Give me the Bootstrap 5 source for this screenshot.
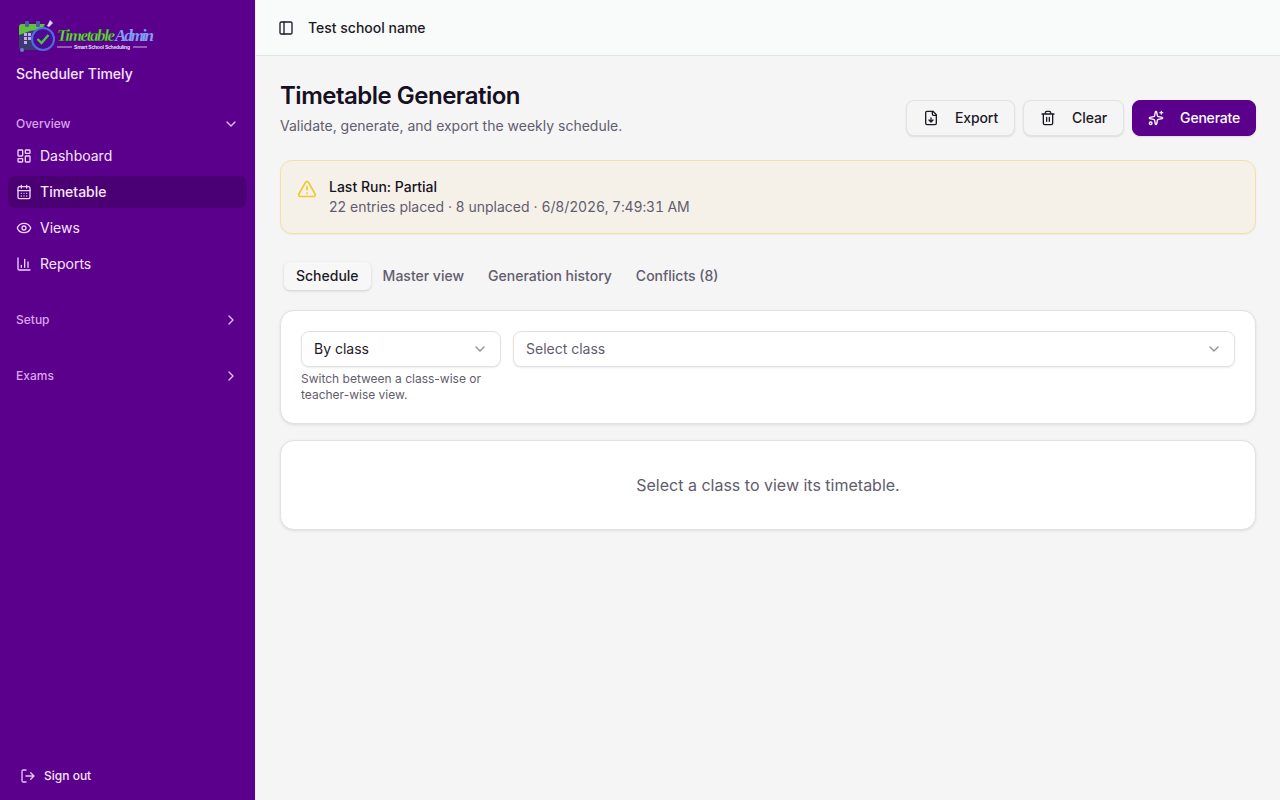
<!DOCTYPE html>
<html>
  <head>
    <title>Timetable Generation</title>
    <link href="https://cdn.jsdelivr.net/npm/bootstrap@5.3.3/dist/css/bootstrap.min.css" rel="stylesheet" />
    <script src="https://cdn.jsdelivr.net/npm/bootstrap@5.3.3/dist/js/bootstrap.bundle.min.js"></script>
    <style>
      body {
        font-family: Inter, "Liberation Sans", sans-serif;
        font-size: 14px;
        line-height: 20px;
        background: #f5f5f5;
        color: #17121f;
        height: 800px;
        overflow: hidden;
      }
      svg.ico {
        width: 16px;
        height: 16px;
        fill: none;
        stroke: currentColor;
        stroke-width: 2;
        stroke-linecap: round;
        stroke-linejoin: round;
        flex-shrink: 0;
      }
      .side-wrap {
        width: 256px;
        height: 800px;
        background: #5b008c;
        border-right: 1px solid #f3f1f5;
        color: #f6e6fd;
        flex-shrink: 0;
      }
      .brand-box {
        padding: 18px 16px 0;
        height: 100px;
      }
      .brand-name {
        font-weight: 500;
        font-size: 14px;
        line-height: 20px;
        margin-top: 8px;
      }
      .logo-text {
        font-family: "Liberation Serif", serif;
        font-style: italic;
        font-weight: 700;
        font-size: 17px;
      }
      .logo-sub {
        font-family: "Liberation Sans", sans-serif;
        font-size: 5px;
        font-weight: 700;
      }
      .group-label {
        height: 32px;
        padding: 0 8px;
        font-size: 12px;
        font-weight: 500;
        color: #d9a5ee;
      }
      .group-label svg {
        color: #e3bdf3;
      }
      .side-link {
        height: 32px;
        padding: 0 8px;
        margin-bottom: 4px;
        border-radius: 8px;
        color: #f6e6fd;
        text-decoration: none;
        font-size: 14px;
      }
      .side-link svg {
        color: #efd4fa;
      }
      .side-link.on {
        background: #4a0073;
        font-weight: 500;
      }
      .signout-link {
        height: 32px;
        padding: 0 12px;
        margin: 0 8px 8px;
        font-size: 12px;
        font-weight: 500;
        color: #f6e6fd;
        text-decoration: none;
      }
      .signout-link svg {
        color: #e9c4f8;
      }
      .top-strip {
        height: 56px;
        padding: 0 22px;
        background: #f9fafa;
        border-bottom: 1px solid #e1e3e4;
        font-weight: 500;
        color: #1d1a26;
      }
      .page-body {
        padding: 24px;
      }
      .page-title {
        font-size: 24px;
        line-height: 32px;
        font-weight: 600;
        letter-spacing: -0.5px;
        margin: 0;
        color: #170f24;
      }
      .page-sub {
        line-height: 20px;
        margin: 4px 0 0;
        color: #625c6e;
      }
      .tool-btn {
        height: 36px;
        padding: 0 16px;
        font-size: 14px;
        line-height: 20px;
        font-weight: 500;
        letter-spacing: -0.1px;
        border-radius: 8px;
        background: #f5f5f5;
        border: 1px solid #e2e2e4;
        color: #1d1a26;
        box-shadow: 0 1px 2px rgba(0, 0, 0, 0.1);
        gap: 16px;
      }
      .tool-btn:hover {
        background: #eee;
      }
      .tool-btn.main-btn {
        padding: 0 15px;
        letter-spacing: -0.2px;
        background: #5b008c;
        border-color: #5b008c;
        color: #fff;
      }
      .run-alert {
        height: 74px;
        margin: 24px 0 0;
        padding: 0 16px;
        border-radius: 12px;
        background: #f5f1e8;
        border: 1px solid #f1e2a2;
        box-shadow: 0 1px 2px rgba(0, 0, 0, 0.05);
        gap: 12px;
      }
      .run-alert svg {
        width: 20px;
        height: 20px;
        color: #eec92f;
        margin-bottom: 16px;
      }
      .run-title {
        font-weight: 500;
        line-height: 20px;
        color: #17121f;
      }
      .run-info {
        line-height: 20px;
        color: #625c6e;
      }
      .run-date {
        font-variant-numeric: tabular-nums;
        letter-spacing: -0.15px;
      }
      .tab-row {
        margin: 27px 0 19px;
        padding: 0 4px;
        height: 30px;
      }
      .tab-row .nav-link {
        height: 28px;
        padding: 0 12px;
        font-size: 14px;
        font-weight: 500;
        line-height: 28px;
        color: #625c6e;
        border-radius: 6px;
      }
      .tab-row .nav-link.active {
        background: #f7f7f7;
        color: #1d1a26;
        box-shadow: 0 1px 3px rgba(0, 0, 0, 0.16);
      }
      .panel-box {
        border: 1px solid #e2e2e4;
        border-radius: 14px;
        background: #fff;
        box-shadow: 0 1px 3px rgba(0, 0, 0, 0.1);
      }
      .filter-box {
        padding: 20px;
        margin-bottom: 16px;
        height: 114px;
      }
      .pick-box {
        height: 36px;
        padding: 0 12px;
        font-size: 14px;
        line-height: 20px;
        color: #1d1a26;
        border: 1px solid #e2e2e4;
        border-radius: 8px;
        box-shadow: 0 1px 2px rgba(0, 0, 0, 0.08);
        background-size: 16px 16px;
        background-position: right 12px center;
        background-image: url("data:image/svg+xml,%3csvg xmlns='http://www.w3.org/2000/svg' viewBox='0 0 24 24' fill='none' stroke='%23938d9d' stroke-width='2' stroke-linecap='round' stroke-linejoin='round'%3e%3cpath d='m6 9 6 6 6-6'/%3e%3c/svg%3e");
      }
      .pick-box.empty-pick {
        color: #625c6e;
      }
      .pick-col {
        width: 200px;
      }
      .pick-hint {
        margin-top: 4px;
        font-size: 12px;
        line-height: 16px;
        color: #625c6e;
      }
      .empty-box {
        height: 90px;
        font-size: 16px;
        color: #625c6e;
      }
    </style>
  </head>
  <body>
    <div class="d-flex">
      <aside class="side-wrap d-flex flex-column">
        <div class="brand-box">
          <svg width="140" height="38" viewBox="0 0 140 38" class="d-block">
            <rect x="3" y="6" width="26" height="26" rx="3" fill="#3d3a72" />
            <path d="M3 17V9a3 3 0 0 1 3-3h23l-3 5-12 2z" fill="#5fc13f" />
            <rect x="9" y="3" width="4" height="6" rx="1" fill="#4a5f9a" />
            <rect x="20" y="3" width="4" height="6" rx="1" fill="#4a5f9a" />
            <path d="m34 2 3 3-4 4-2-1z" fill="#d8d4e8" />
            <g fill="#c9a9ee">
              <rect x="8" y="15" width="3" height="3" />
              <rect x="12" y="15" width="3" height="3" />
              <rect x="8" y="19" width="3" height="3" />
              <rect x="12" y="19" width="3" height="3" />
              <rect x="8" y="23" width="3" height="3" />
            </g>
            <circle cx="6" cy="32" r="2" fill="#6b7fd0" />
            <circle cx="27" cy="21" r="11" fill="#4d0a98" stroke="#4f6fe0" stroke-width="2" />
            <path d="m21.500 21 4 4 7-8" fill="none" stroke="#58c23c" stroke-width="2.400" />
            <text x="41" y="23" class="logo-text" fill="#6ad64a" stroke="#12351c" stroke-width="0.300" textLength="58">Timetable</text>
            <text x="99" y="23" class="logo-text" fill="#7fa0f2" font-weight="400" textLength="39">Admin</text>
            <path d="M41 29h15M117 29h14" stroke="#e8e2f5" stroke-width="0.800" />
            <text x="58" y="31" class="logo-sub" fill="#e8e2f5" textLength="56">Smart School Scheduling</text>
          </svg>
          <div class="brand-name">Scheduler Timely</div>
        </div>
        <div class="px-2">
          <div class="group-label d-flex align-items-center justify-content-between mt-2">
            <span>Overview</span>
            <svg class="ico" viewBox="0 0 24 24"><path d="m6 9 6 6 6-6" /></svg>
          </div>
          <a class="side-link d-flex align-items-center gap-2" href="#">
            <svg class="ico" viewBox="0 0 24 24"><rect x="3" y="3" width="7" height="9" rx="1" /><rect x="14" y="3" width="7" height="5" rx="1" /><rect x="14" y="12" width="7" height="9" rx="1" /><rect x="3" y="16" width="7" height="5" rx="1" /></svg>
            Dashboard
          </a>
          <a class="side-link on d-flex align-items-center gap-2" href="#">
            <svg class="ico" viewBox="0 0 24 24"><path d="M8 2v4M16 2v4" /><rect x="3" y="4" width="18" height="18" rx="2" /><path d="M3 10h18M8 14h.01M12 14h.01M16 14h.01M8 18h.01M12 18h.01M16 18h.01" /></svg>
            Timetable
          </a>
          <a class="side-link d-flex align-items-center gap-2" href="#">
            <svg class="ico" viewBox="0 0 24 24"><path d="M2.062 12.348a1 1 0 0 1 0-.696 10.750 10.750 0 0 1 19.876 0 1 1 0 0 1 0 .696 10.750 10.750 0 0 1-19.876 0" /><circle cx="12" cy="12" r="3" /></svg>
            Views
          </a>
          <a class="side-link d-flex align-items-center gap-2" href="#">
            <svg class="ico" viewBox="0 0 24 24"><path d="M3 3v16a2 2 0 0 0 2 2h16M18 17V9M13 17V5M8 17v-3" /></svg>
            Reports
          </a>
          <div class="group-label d-flex align-items-center justify-content-between" style="margin-top: 24px">
            <span>Setup</span>
            <svg class="ico" viewBox="0 0 24 24"><path d="m9 18 6-6-6-6" /></svg>
          </div>
          <div class="group-label d-flex align-items-center justify-content-between" style="margin-top: 24px">
            <span>Exams</span>
            <svg class="ico" viewBox="0 0 24 24"><path d="m9 18 6-6-6-6" /></svg>
          </div>
        </div>
        <a class="signout-link d-flex align-items-center gap-2 mt-auto" href="#">
          <svg class="ico" viewBox="0 0 24 24"><path d="m16 17 5-5-5-5M21 12H9M9 21H5a2 2 0 0 1-2-2V5a2 2 0 0 1 2-2h4" /></svg>
          Sign out
        </a>
      </aside>

      <main class="flex-grow-1">
        <header class="top-strip d-flex align-items-center">
          <svg class="ico" viewBox="0 0 24 24" style="margin-right: 14px"><rect x="3" y="3" width="18" height="18" rx="2" /><path d="M9 3v18" /></svg>
          <span>Test school name</span>
        </header>

        <div class="page-body">
          <div class="d-flex justify-content-between align-items-end">
            <div>
              <h1 class="page-title">Timetable Generation</h1>
              <p class="page-sub">Validate, generate, and export the weekly schedule.</p>
            </div>
            <div class="d-flex gap-2">
              <button class="btn tool-btn d-flex align-items-center" type="button">
                <svg class="ico" viewBox="0 0 24 24"><path d="M15 2H6a2 2 0 0 0-2 2v16a2 2 0 0 0 2 2h12a2 2 0 0 0 2-2V7Z" /><path d="M14 2v4a2 2 0 0 0 2 2h4M12 18v-6M9 15l3 3 3-3" /></svg>
                Export
              </button>
              <button class="btn tool-btn d-flex align-items-center" type="button">
                <svg class="ico" viewBox="0 0 24 24"><path d="M3 6h18M19 6v14c0 1-1 2-2 2H7c-1 0-2-1-2-2V6M8 6V4c0-1 1-2 2-2h4c1 0 2 1 2 2v2M10 11v6M14 11v6" /></svg>
                Clear
              </button>
              <button class="btn tool-btn main-btn d-flex align-items-center" type="button">
                <svg class="ico" viewBox="0 0 24 24"><path d="M11.017 2.814a1 1 0 0 1 1.966 0l1.051 5.558a2 2 0 0 0 1.594 1.594l5.558 1.051a1 1 0 0 1 0 1.966l-5.558 1.051a2 2 0 0 0-1.594 1.594l-1.051 5.558a1 1 0 0 1-1.966 0l-1.051-5.558a2 2 0 0 0-1.594-1.594l-5.558-1.051a1 1 0 0 1 0-1.966l5.558-1.051a2 2 0 0 0 1.594-1.594z" /><path d="M20 2v4M22 4h-4" /><circle cx="4" cy="20" r="2" /></svg>
                Generate
              </button>
            </div>
          </div>

          <div class="run-alert d-flex align-items-center" role="alert">
            <svg class="ico" viewBox="0 0 24 24"><path d="m21.730 18-8-14a2 2 0 0 0-3.480 0l-8 14A2 2 0 0 0 4 21h16a2 2 0 0 0 1.730-3M12 9v4M12 17h.01" /></svg>
            <div>
              <div class="run-title">Last Run: Partial</div>
              <div class="run-info">22 entries placed · 8 unplaced · <span class="run-date">6/8/2026, 7:49:31 AM</span></div>
            </div>
          </div>

          <ul class="nav tab-row align-items-center">
            <li class="nav-item"><a class="nav-link active" href="#">Schedule</a></li>
            <li class="nav-item"><a class="nav-link" href="#">Master view</a></li>
            <li class="nav-item"><a class="nav-link" href="#">Generation history</a></li>
            <li class="nav-item"><a class="nav-link" href="#">Conflicts (8)</a></li>
          </ul>

          <div class="panel-box filter-box d-flex gap-2">
            <div class="pick-col flex-shrink-0 me-1">
              <select class="form-select pick-box">
                <option>By class</option>
                <option>By teacher</option>
              </select>
              <div class="pick-hint">Switch between a class-wise or teacher-wise view.</div>
            </div>
            <div class="flex-grow-1">
              <select class="form-select pick-box empty-pick">
                <option>Select class</option>
              </select>
            </div>
          </div>

          <div class="panel-box empty-box d-flex align-items-center justify-content-center">
            Select a class to view its timetable.
          </div>
        </div>
      </main>
    </div>
  </body>
</html>
